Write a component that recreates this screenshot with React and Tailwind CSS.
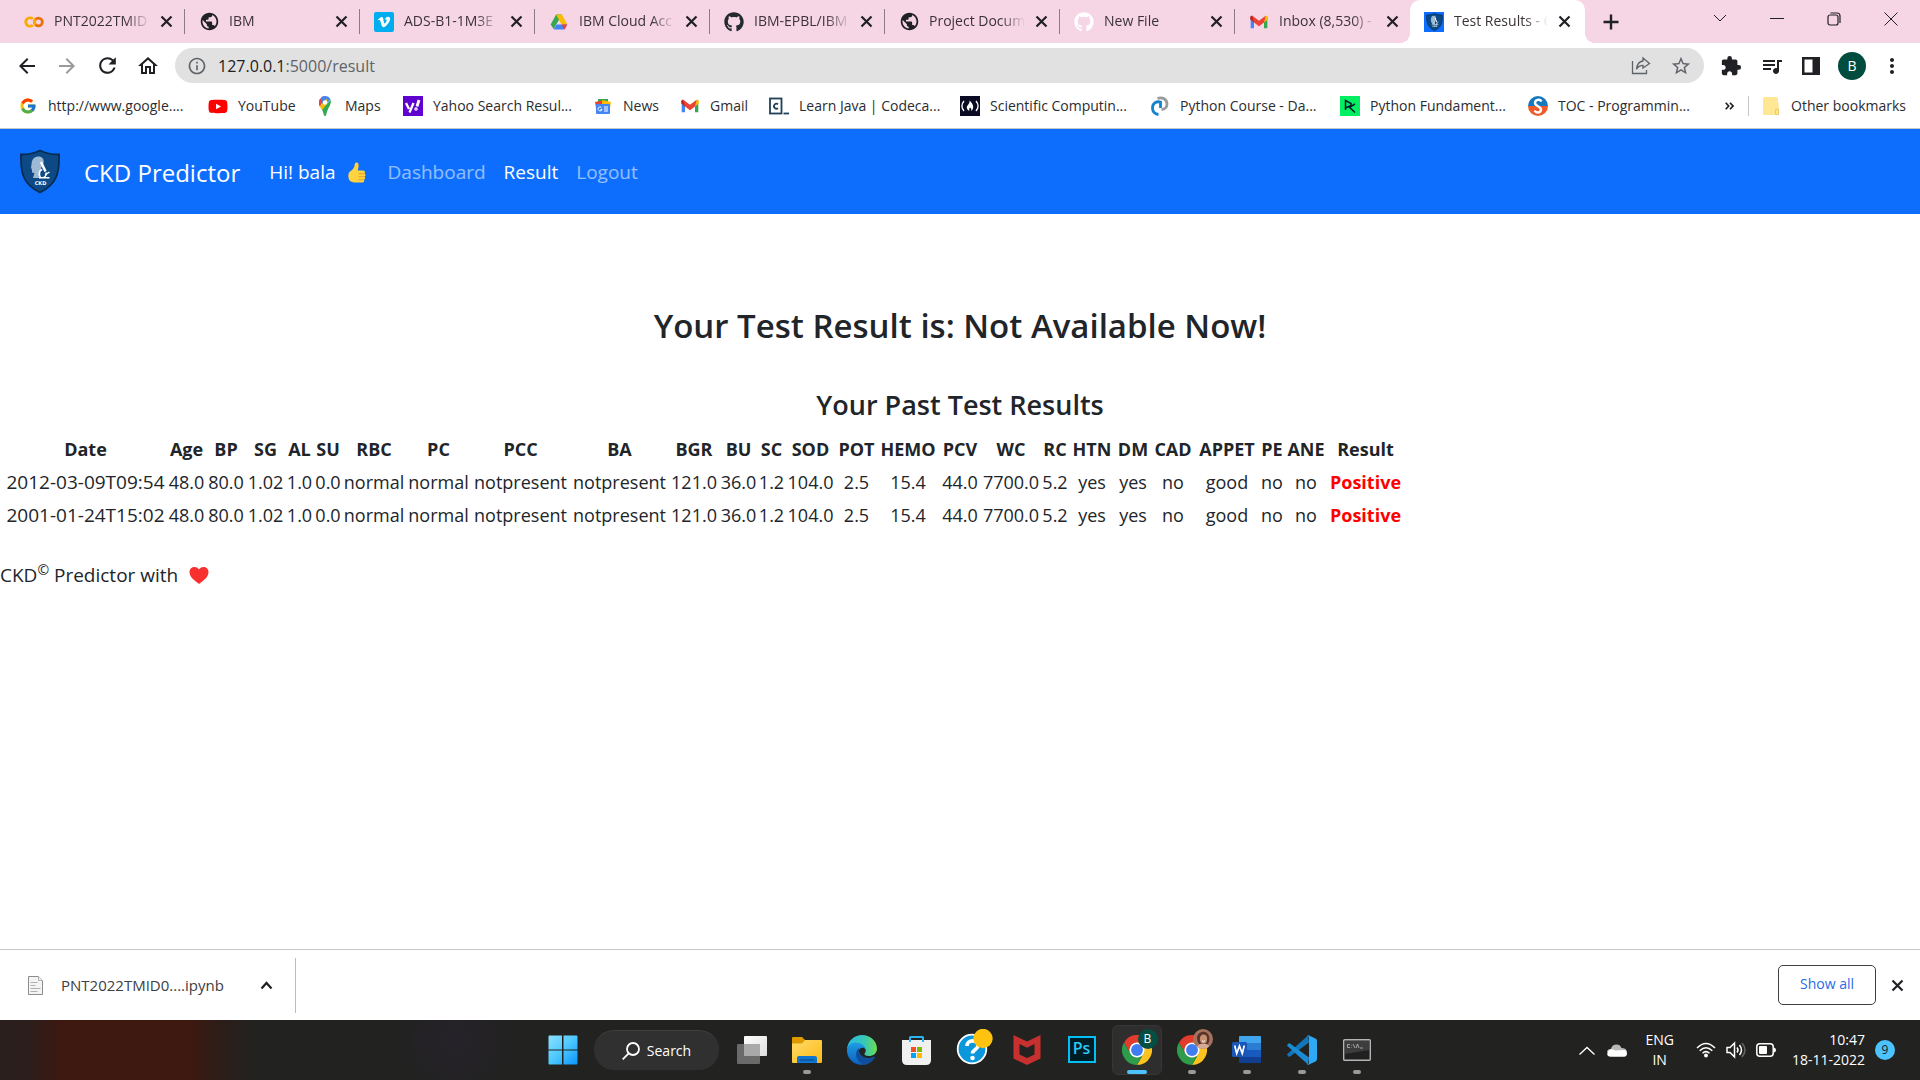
import React from "react";
import {
  MdArrowBack, MdArrowForward, MdRefresh, MdOutlineHome, MdInfoOutline, MdStarBorder,
  MdExtension, MdQueueMusic, MdMoreVert, MdPublic,
} from "react-icons/md";
import { FaGithub, FaYoutube, FaVimeoV } from "react-icons/fa";
import { FcGoogle } from "react-icons/fc";

const Cross = () => (
  <svg width="13" height="13" viewBox="0 0 13 13" fill="none" stroke="currentColor" strokeWidth="2.200"><path d="m1.500 1.500 10 10m0-10-10 10" /></svg>
);

const Gmail = () => (
  <svg viewBox="0 0 24 24" className="size-5">
    <path d="M2 6v13.5h4V11z" fill="#4285f4" />
    <path d="M22 6v13.5h-4V11z" fill="#34a853" />
    <path d="M18 7.5 20 4.6c1.300-.6 2.500.3 2.500 1.600V9L18 12.500z" fill="#fbbc04" />
    <path d="M6 7.500 4 4.600C2.700 4 1.500 4.900 1.500 6.200V9L6 12.500z" fill="#c5221f" />
    <path d="M4 4.500 12 10.500l8-6 -2 8-6 4.500-6-4.500z" fill="#ea4335" />
  </svg>
);

const Colab = () => (
  <svg viewBox="0 0 24 24" className="size-5" fill="none" strokeWidth="3.400">
    <path d="M10.500 8.300a5 5 0 1 0 0 7.400" stroke="#f9ab00" />
    <circle cx="17.300" cy="12" r="4.700" stroke="#e8710a" />
    <path d="M13.800 15.400a5 5 0 0 1 0-6.800" stroke="#f9ab00" />
  </svg>
);

const Vimeo = () => (
  <span className="flex size-5 items-center justify-center rounded-xs bg-[#00adef] text-white"><FaVimeoV size={14} /></span>
);

const Drive = () => (
  <svg viewBox="0 0 24 24" className="size-5">
    <path d="M8.500 3h7L12 9.200 5.500 20.500 2 15z" fill="#34a853" />
    <path d="M8.500 3h7L22 15h-7z" fill="#fbbc04" />
    <path d="M9 15h13l-3.500 6h-13z" fill="#4285f4" />
    <path d="M18.500 21 15 15h7z" fill="#ea4335" />
  </svg>
);

const Shield = ({ className }) => (
  <svg viewBox="0 0 40 44" className={className} role="img" aria-label="CKD logo">
    <path d="M20 1C14 4 8 5 1 5c-.500 18 2 30 19 38C37 35 39.500 23 39 5 32 5 26 4 20 1z" fill="#0d4a85" stroke="#082b50" strokeWidth="1.800" />
    <path d="M17.500 7c4-.500 7 2 6 6.500-.500 2-2.500 4-2.500 6l-1 9h-7l1.500-5c-3 .3-2.500-1-2.500-3l-1-2.500c1-3-.5-10 6.500-11z" fill="#9db9d3" />
    <path d="m21 12.500 4.500 9.500" fill="none" stroke="#fff" strokeWidth="2.600" />
    <path d="M19 28.200h10.500M20.500 27.500c-2.500-2.500-1.500-6.500 1.700-7.500M23.500 28c2.500-1 3-3 2.500-5M25 25.500l4.500-3" fill="none" stroke="#fff" strokeWidth="1.400" />
    <text x="20.500" y="35" textAnchor="middle" fontSize="5" fontWeight="900" fill="#fff" fontFamily="DejaVu Sans">CKD</text>
  </svg>
);

const MapsPin = () => (
  <svg viewBox="0 0 20 20" className="size-5">
    <path d="M4 7.500C4 3.500 6.500 0 10 0l-5 10.500C4.300 9.500 4 8.500 4 7.500z" fill="#ea4335" />
    <path d="M10 0c2.500 0 4.500 1 5.500 3.500L8 11 5.500 3C6.500 1 8 0 10 0z" fill="#4285f4" />
    <path d="M4.800 3 7.500 6 4.800 10.500C3.700 8 3.700 5 4.800 3z" fill="#ea4335" />
    <path d="M4.800 10.500 12 2.500 12.800 8 7 14z" fill="#fbbc04" />
    <path d="M15.500 3.500C17 9 12.500 11 11.200 19c-.300 1.300-2 1.300-2.400 0C8.300 16.500 8 15.500 7 14z" fill="#34a853" />
    <circle cx="10" cy="6.500" r="2.300" fill="#fff" />
  </svg>
);

const Yahoo = () => (
  <span className="flex size-5 bg-[#5f01d1]">
    <svg viewBox="0 0 20 20" className="size-5" fill="none" stroke="#fff" strokeWidth="2.300">
      <path d="m3 7 3 6M10.500 7l-4 9.500" /><path d="m16 4-2 6.500" strokeWidth="2.800" /><circle cx="13" cy="13" r=".600" />
    </svg>
  </span>
);

const News = () => (
  <svg viewBox="0 0 20 20" className="size-5">
    <path d="M5 3h10v5H5z" fill="#34a853" />
    <path d="m2 6 9-2 1 5-9 3z" fill="#ea4335" /><path d="m9 4 9 2-1 6H9z" fill="#fbbc04" />
    <rect x="3" y="8" width="14" height="10" rx="1" fill="#4285f4" />
    <path d="M8.500 11.500A2 2 0 1 0 9 13.500H7.500M11 11h4M11 13h4M11 15h4" stroke="#fff" fill="none" />
  </svg>
);

const Codecademy = () => (
  <svg viewBox="0 0 20 20" className="size-5" fill="none" stroke="#204056">
    <rect x="1" y="2.500" width="11.500" height="15" strokeWidth="1.800" />
    <path d="M9 8.200a2.500 2.500 0 1 0 0 4" strokeWidth="1.800" /><path d="M14.500 17.500H20" strokeWidth="1.800" />
  </svg>
);

const FreeCode = () => (
  <svg viewBox="0 0 20 20" className="size-5">
    <rect width="20" height="20" fill="#0a0a23" />
    <path d="M4 5c-2.500 3-2.500 7 0 10M16 5c2.500 3 2.500 7 0 10" stroke="#fff" strokeWidth="1.300" fill="none" />
    <path d="M9.500 4.500c2 2 3.700 4 3.700 6.500 0 2-1 3.200-2 4 .5-2-.2-3-1.200-3.500-.7 1-1 2-.7 3.500-1.500-.7-2.500-2-2.500-3.700 0-2 3.200-3.300 2.700-6.800z" fill="#fff" />
  </svg>
);

const PyCourse = () => (
  <svg viewBox="0 0 20 20" className="size-5" fill="none" strokeWidth="2.800">
    <path d="M7.500 2.500c5-2 9.500 1 9.500 5.500 0 3-2 5.500-5.500 5.500" stroke="#9a9a9a" />
    <path d="M10.500 12V6C6 5 2.500 7.500 2.500 12c0 4 2.500 6 6 6.500" stroke="#1583cc" />
  </svg>
);

const DataCamp = () => (
  <svg viewBox="0 0 20 20" className="size-5">
    <rect width="20" height="20" fill="#03ef62" />
    <path d="M5.500 14V4.500L11 7.500v2L5.500 12M15 8l-5.500 3.300L15 16.500" stroke="#05192d" strokeWidth="1.500" fill="none" />
  </svg>
);

const Toc = () => (
  <svg viewBox="0 0 20 20" className="size-5">
    <path d="M0 10a10 10 0 0 1 20 0z" fill="#1679bd" /><path d="M0 10a10 10 0 0 0 20 0z" fill="#f0592a" />
    <path d="M13.500 5.500C12 2.500 7 3.500 7 7c0 3.500 6 3 6 6.500 0 3.500-5 4-6.500 1" stroke="#fff" strokeWidth="2.400" fill="none" />
  </svg>
);

const TabShield = () => (
  <span className="flex size-5 items-center justify-center bg-[#0d6efd]"><Shield className="h-[18px] w-[17px]" /></span>
);

const Globe = () => <MdPublic size={21} className="-m-px text-[#202124]" />;

const tabs = [
  { icon: <Colab />, title: "PNT2022TMID" },
  { icon: <Globe />, title: "IBM" },
  { icon: <Vimeo />, title: "ADS-B1-1M3E" },
  { icon: <Drive />, title: "IBM Cloud Acc" },
  { icon: <FaGithub size={20} className="text-[#24292f]" />, title: "IBM-EPBL/IBM" },
  { icon: <Globe />, title: "Project Docum" },
  { icon: <FaGithub size={20} className="text-white" />, title: "New File" },
  { icon: <Gmail />, title: "Inbox (8,530) -" },
  { icon: <TabShield />, title: "Test Results - C", active: true },
];

const bookmarks = [
  { icon: <FcGoogle size={18} />, label: "http://www.google....", w: "w-[190px]" },
  { icon: <FaYoutube size={21} className="text-[#f00]" />, label: "YouTube", w: "w-[107px]" },
  { icon: <MapsPin />, label: "Maps", w: "w-[88px]" },
  { icon: <Yahoo />, label: "Yahoo Search Resul...", w: "w-[190px]" },
  { icon: <News />, label: "News", w: "w-[87px]" },
  { icon: <Gmail />, label: "Gmail", w: "w-[89px]" },
  { icon: <Codecademy />, label: "Learn Java | Codeca...", w: "w-[191px]" },
  { icon: <FreeCode />, label: "Scientific Computin...", w: "w-[190px]" },
  { icon: <PyCourse />, label: "Python Course - Da...", w: "w-[190px]" },
  { icon: <DataCamp />, label: "Python Fundament...", w: "w-[188px]" },
  { icon: <Toc />, label: "TOC - Programmin...", w: "w-[188px]" },
];

function TabStrip() {
  return (
    <div className="flex h-[43px] items-stretch bg-[#f6d5e4] pl-2.5 text-sm">
      {tabs.map((t, i) => (
        <div
          key={i}
          className={
            t.active
              ? "relative flex w-[175px] items-center gap-2.5 rounded-t-[10px] bg-white pl-3.5 pr-3.5 before:absolute before:-left-2.5 before:bottom-0 before:size-2.5 before:bg-[radial-gradient(circle_at_0_0,transparent_10px,#fff_10px)] after:absolute after:-right-2.5 after:bottom-0 after:size-2.5 after:bg-[radial-gradient(circle_at_100%_0,transparent_10px,#fff_10px)]"
              : "flex w-[175px] items-center gap-2.5 pl-3.5"
          }
        >
          <span className="flex w-5 shrink-0 justify-center">{t.icon}</span>
          <span className="min-w-0 flex-1 overflow-hidden whitespace-nowrap pb-0.5 text-[#3b3338] [mask-image:linear-gradient(to_right,#000_75%,transparent)]">{t.title}</span>
          <button aria-label={"Close " + t.title} className="shrink-0 text-[#202124]"><Cross /></button>
          {!t.active && <span className={i === 7 ? "h-6 w-px" : "ml-px h-[25px] w-px bg-[#8d7b84]"} />}
        </div>
      ))}
      <button aria-label="New tab" className="ml-3.5 flex items-center text-[#202124]">
        <svg width="16" height="16" className="mx-1" stroke="currentColor" strokeWidth="2.400"><path d="M8 0.500v15M0.500 8h15" /></svg>
      </button>
      <div className="ml-auto mr-px flex h-[37px] items-center text-[#202124]">
        <button aria-label="Search tabs" className="flex w-[57px] justify-center"><svg width="14" height="9" fill="none" stroke="currentColor"><path d="m1 1 6 6 6-6" /></svg></button>
        <button aria-label="Minimize" className="flex w-[57px] justify-center"><svg width="14" height="9" fill="none" stroke="currentColor"><path d="M0 4.500h14" /></svg></button>
        <button aria-label="Restore" className="flex w-[57px] justify-center"><svg width="14" height="14" fill="none" stroke="currentColor" strokeWidth="1.200"><rect x="1" y="3" width="10" height="10" rx="2" /><path d="M3.500 1H10q3 0 3 3v7" /></svg></button>
        <button aria-label="Close window" className="flex w-[57px] justify-center"><svg width="14" height="14" fill="none" stroke="currentColor"><path d="m.5.5 13 13m0-13-13 13" /></svg></button>
      </div>
    </div>
  );
}

function Toolbar() {
  return (
    <div className="flex h-[45px] items-center bg-white pl-[15px] pr-5 text-[#202124]">
      <div className="flex gap-4">
        <button aria-label="Back"><MdArrowBack size={24} /></button>
        <button aria-label="Forward" className="text-[#9a9a9a]"><MdArrowForward size={24} /></button>
        <button aria-label="Reload"><MdRefresh size={25} /></button>
        <button aria-label="Home"><MdOutlineHome size={24} /></button>
      </div>
      <div className="ml-[15px] flex h-[35px] flex-1 items-center rounded-full bg-[#e1e1e1] pl-3 pr-3 text-[#5f6368]">
        <MdInfoOutline size={20} />
        <div className="ml-[11px] flex-1 text-base">
          <span className="text-[#202124]">127.0.0.1</span>:5000/result
        </div>
        <button aria-label="Share" className="mr-[19px]">
          <svg width="20" height="20" viewBox="0 0 20 20" fill="none" stroke="currentColor" strokeWidth="1.300"><path d="M1.500 5v12.500h14V14M12 2l6.500 5.500L12 12V9.300c-3 0-5 1-6.500 4C6 8.500 8 5.500 12 5z" /></svg>
        </button>
        <button aria-label="Bookmark this page"><MdStarBorder size={22} /></button>
      </div>
      <div className="flex items-center gap-[18px] pl-4">
        <button aria-label="Extensions"><MdExtension size={22} /></button>
        <button aria-label="Media"><MdQueueMusic size={24} /></button>
        <button aria-label="Side panel"><svg width="18" height="18"><path d="M0 0h18v18H0zM2.500 2.500v13h8v-13z" fillRule="evenodd" fill="currentColor" /></svg></button>
        <button aria-label="Profile" className="size-7 rounded-full bg-[#004d40] text-sm text-white">B</button>
        <button aria-label="Menu" className="flex w-4 justify-center"><MdMoreVert size={24} className="shrink-0" /></button>
      </div>
    </div>
  );
}

function Bookmarks() {
  return (
    <nav aria-label="Bookmarks" className="flex h-[41px] items-center border-b border-[#c6c6c6] bg-white pb-1 pl-[18px] pr-3.5 text-sm text-[#2b2c30]">
      {bookmarks.map((b) => (
        <a key={b.label} href="#" className={"flex shrink-0 items-center gap-2.5 whitespace-nowrap " + b.w}>
          <span className="flex w-5 shrink-0 justify-center">{b.icon}</span>
          {b.label}
        </a>
      ))}
      <button aria-label="More bookmarks" className="ml-auto pr-3.5 text-[#202124]"><svg width="9" height="8" fill="none" stroke="currentColor" strokeWidth="1.700"><path d="m.7.7 3 3.300-3 3.300M5 .7 8 4 5 7.300" /></svg></button>
      <a href="#" className="flex h-5 items-center gap-[11px] whitespace-nowrap border-l border-[#c6c6c6] pl-3.5">
        <svg width="17" height="19"><rect width="15" height="18" rx="1.500" fill="#ffe794" /><path d="M12 18v-5q0-1.500 1.500-1.500H15V6h.500v12z" fill="#f8d775" /><path d="M12.500 12.500h3v5h-3z" fill="#ffe794" stroke="#f0cc60" /></svg>
        Other bookmarks
      </a>
    </nav>
  );
}

const ThumbsUp = () => (
  <svg width="18" height="21" viewBox="0 0 18 21" role="img" aria-label="thumbs up">
    <path d="M1.500 10c2-1.500 4.500-3.500 5-6 .2-1.500.2-3.500 2-3.500 2 0 2.500 2 2 4.500l-.8 3.500H15q2 .2 2 1.700c0 .8-.5 1.200-.5 1.200s1 .5 1 1.700-1 1.600-1 1.600.7.600.6 1.600c-.1 1-1.100 1.400-1.100 1.400s.4.500.2 1.300c-.3 1-1.200 1.500-2.400 1.500H7c-3 0-5-1-6-3C0 15 0 11.500 1.500 10z" fill="#ffd23f" />
    <path d="M10.500 11.700h6M10.500 14.700h6M10.500 17.700h5.500" stroke="#e0a01c" strokeWidth=".900" />
  </svg>
);

function SiteNav() {
  return (
    <nav aria-label="Main" className="flex h-[85px] items-center bg-[#0d6efd] px-5">
      <Shield className="h-[45px] w-10" />
      <a href="#" className="ml-6 pt-0.5 text-2xl text-white">CKD Predictor</a>
      <div className="ml-[29px] flex items-center gap-[18px] pt-0.5 text-[19px]">
        <a href="#" className="mr-1 flex items-center gap-3 text-white">Hi! bala <ThumbsUp /></a>
        <a href="#" className="text-white/55">Dashboard</a>
        <a href="#" className="text-white">Result</a>
        <a href="#" className="text-white/55">Logout</a>
      </div>
    </nav>
  );
}

const columns = [
  ["Date", "w-[163px]"], ["Age", "w-[39px]"], ["BP", "w-[40px]"], ["SG", "w-[39px]"], ["AL", "w-[29px]"],
  ["SU", "w-[28px]"], ["RBC", "w-[64px]"], ["PC", "w-[65px]"], ["PCC", "w-[99px]"], ["BA", "w-[99px]"],
  ["BGR", "w-[50px]"], ["BU", "w-[39px]"], ["SC", "w-[27px]"], ["SOD", "w-[51px]"], ["POT", "w-[41px]"],
  ["HEMO", "w-[62px]"], ["PCV", "w-[42px]"], ["WC", "w-[60px]"], ["RC", "w-[28px]"], ["HTN", "w-[46px]"],
  ["DM", "w-[36px]"], ["CAD", "w-[44px]"], ["APPET", "w-[64px]"], ["PE", "w-[26px]"], ["ANE", "w-[42px]"],
  ["Result", "w-[77px]"],
];
const shared = ["48.0", "80.0", "1.02", "1.0", "0.0", "normal", "normal", "notpresent", "notpresent", "121.0", "36.0", "1.2", "104.0", "2.5", "15.4", "44.0", "7700.0", "5.2", "yes", "yes", "no", "good", "no", "no"];
const rows = [["2012-03-09T09:54", ...shared], ["2001-01-24T15:02", ...shared]];

function Results() {
  return (
    <main className="flex-1 bg-white text-[#212529]">
      <h1 className="pt-[88px] text-center text-[33px] font-semibold leading-[48px]">Your Test Result is: Not Available Now!</h1>
      <h2 className="mt-[37px] text-center text-[27px] font-semibold leading-9">Your Past Test Results</h2>
      <table className="ml-1 mt-2.5 table-fixed border-collapse whitespace-nowrap text-center text-lg leading-[33px]">
        <thead>
          <tr>{columns.map(([c, w]) => <th key={c} scope="col" className={"p-0 font-bold " + w}>{c}</th>)}</tr>
        </thead>
        <tbody>
          {rows.map((r) => (
            <tr key={r[0]}>
              {r.map((v, i) => <td key={i} className={i === 0 ? "p-0 text-[19px] leading-[33px]" : "p-0"}>{v}</td>)}
              <td className="p-0 font-bold text-[#f00]">Positive</td>
            </tr>
          ))}
        </tbody>
      </table>
      <footer className="mt-[26px] flex items-center text-[19px] leading-[34px]">
        <span>CKD<sup className="text-sm">©</sup> Predictor with</span>
        <svg width="20" height="19" viewBox="0 0 20 19" className="ml-[11px]" role="img" aria-label="love"><path d="M10 18C5 14 .5 11 .5 6 .5 1 7-1 10 3.500 13-1 19.500 1 19.500 6c0 5-4.500 8-9.500 12z" fill="#f8312f" /></svg>
      </footer>
    </main>
  );
}

function DownloadBar() {
  return (
    <div className="flex h-[71px] items-center border-t border-[#c8c8c8] bg-white pr-4 text-[#202124]">
      <div className="flex h-[55px] w-[296px] items-center border-r border-[#bdbdbd] pl-7">
        <svg width="15" height="19" fill="#f4f4f4" stroke="#8c8c8c"><path d="M.5.5h10l4 4v14H.5z" /><path d="M10.500.5v4h4M2.500 6.500h7M2.500 9.500h5M2.500 12.500h10M2.500 15.500h7" stroke="#b0b0b0" /></svg>
        <span className="ml-[18px] text-[15px] text-[#3c4043]">PNT2022TMID0....ipynb</span>
        <button aria-label="Download options" className="ml-auto mr-[22px]"><svg width="13" height="9" fill="none" stroke="currentColor" strokeWidth="2.200"><path d="m1.500 7.500 5-5.500 5 5.500" /></svg></button>
      </div>
      <button className="ml-auto h-10 w-[98px] rounded-[5px] border border-[#3c4043] pb-0.5 text-sm font-medium text-[#2a6ae8]">Show all</button>
      <button aria-label="Close downloads bar" className="ml-[15px]"><Cross /></button>
    </div>
  );
}

const Start = () => (
  <svg width="30" height="30" viewBox="0 0 30 30">
    <defs><linearGradient id="win" x2="1" y2="1"><stop stopColor="#8fe1ff" /><stop offset=".5" stopColor="#4cc8ff" /><stop offset="1" stopColor="#0a93fb" /></linearGradient></defs>
    <path d="M.5 1.500q0-1 1-1H14v14H.5zM15.500.5h13q1 0 1 1v13h-14zM.5 15.500H14v14H1.500q-1 0-1-1zM15.500 15.500h14v13q0 1-1 1h-13z" fill="url(#win)" />
  </svg>
);
const TaskView = () => (
  <svg width="30" height="28" viewBox="0 0 30 28">
    <defs><linearGradient id="tv" x2="1" y2="1"><stop stopColor="#fff" /><stop offset="1" stopColor="#ddd" /></linearGradient></defs>
    <rect x="7" width="23" height="20" rx="1" fill="url(#tv)" /><rect y="8" width="23" height="20" rx="1" fill="#6a6a6a" /><path d="M7 8h16v12H7z" fill="#a9a9a9" />
  </svg>
);
const Folder = () => (
  <svg width="30" height="27" viewBox="0 0 30 27">
    <defs><linearGradient id="fo" x2="1" y2="1"><stop stopColor="#ffdc6b" /><stop offset="1" stopColor="#fdb813" /></linearGradient></defs>
    <path d="M0 1q0-1 1-1h9l3 3v6H0z" fill="#dd9b00" /><path d="M0 6.500h10L13 3h16q1 0 1 1v21q0 1-1 1H1q-1 0-1-1z" fill="url(#fo)" />
    <path d="M5 26v-5q0-2 2-2h16q2 0 2 2v5z" fill="#0f75cf" /><path d="M8 23h14" stroke="#0a4a8c" strokeWidth="1.200" />
  </svg>
);
const Edge = () => (
  <svg width="30" height="30" viewBox="0 0 30 30">
    <defs>
      <linearGradient id="e1" x2="1"><stop stopColor="#2abbe6" /><stop offset=".600" stopColor="#39c7b5" /><stop offset="1" stopColor="#6cde4c" /></linearGradient>
      <linearGradient id="e2" x2="0" y2="1"><stop stopColor="#1e9de0" /><stop offset="1" stopColor="#0c5fc0" /></linearGradient>
    </defs>
    <path d="M0 14C1 5 8 0 15 0c9 0 15 6.500 15 13.500 0 5-4 7.500-8 7.500-3.500 0-5-1.500-4.500-2.500C20 16 19 10.500 12 10 6 9.500 1 12 0 14z" fill="url(#e1)" />
    <path d="M0 14c2-6 8-7.500 12-6 4 1.300 6.500 4 6.500 6.500-2-3-7-2-7 3C11.500 24 17 28 22 28c-3 2-8 2.500-12 1C3 26.500-.5 20.500 0 14z" fill="url(#e2)" />
    <path d="M12 13c-6 5-2 15 6 16.700C22 29 26 26 28 22.500c.5-1-.5-1-1-.700C20 25 10.500 21 12 13z" fill="#104d9a" />
  </svg>
);
const Store = () => (
  <svg width="29" height="29" viewBox="0 0 29 29">
    <path d="M8 6V1.500Q8 1 8.500 1h12q.5 0 .5.5V6" fill="none" stroke="#2ab4f0" strokeWidth="2" />
    <path d="M0 4h29v20q0 5-5 5H5q-5 0-5-5z" fill="#f0f0f0" /><path d="M8 4v2M21 4v2" stroke="#2ab4f0" strokeWidth="2" />
    <path d="M9 11h5v5H9z" fill="#f25022" /><path d="M15 11h5v5h-5z" fill="#7fba00" /><path d="M9 17h5v5H9z" fill="#00a4ef" /><path d="M15 17h5v5h-5z" fill="#ffb900" />
  </svg>
);
const Help = () => (
  <svg width="38" height="36" viewBox="0 0 38 36" className="-mt-1.5 ml-1.5">
    <circle cx="16" cy="20" r="14.300" fill="#0a97dc" stroke="#fff" strokeWidth="1.800" />
    <path d="M11 17c0-7 11-6.500 11-.5 0 4-5.500 4-5.500 8" fill="none" stroke="#fff" strokeWidth="3.800" /><circle cx="16.500" cy="29" r="2.300" fill="#fff" />
    <circle cx="27" cy="9.500" r="9.700" fill="#ffc20e" />
  </svg>
);
const McAfee = () => (
  <svg width="28" height="30" viewBox="0 0 28 30"><path d="m.5 0 13.500 6.500L27.500 0v23.500L14 30 .5 23.500zM6.500 9v10.500l7.500 3.500 7.500-3.500V9L14 12.800z" fillRule="evenodd" fill="#c6302f" /></svg>
);
const Photoshop = () => (
  <span className="mb-0.5 flex h-[27px] w-7 items-center justify-center border-2 border-[#00c0f5] bg-[#001d26] pb-0.5 text-base font-semibold leading-none text-[#2cc8f5]">Ps</span>
);
const Chrome = () => (
  <svg width="30" height="30" viewBox="0 0 48 48">
    <circle cx="24" cy="24" r="13" fill="#fff" />
    <path d="M24 12h20.800A24 24 0 0 0 3.200 12L13.600 30A12 12 0 0 1 24 12z" fill="#e33b2e" />
    <path d="M34.400 30 24 48A24 24 0 0 0 44.800 12H24A12 12 0 0 1 34.400 30z" fill="#fcc31e" />
    <path d="M13.600 30 3.200 12A24 24 0 0 0 24 48l10.400-18A12 12 0 0 1 13.600 30z" fill="#2d9c4b" />
    <circle cx="24" cy="24" r="9.500" fill="#3f7df0" />
  </svg>
);
const ChromeB = () => (
  <span className="relative"><Chrome /><span className="absolute -right-1.5 -top-1.5 flex size-5 items-center justify-center rounded-full bg-[#064e42] text-xs text-white">B</span></span>
);
const ChromeFace = () => (
  <span className="relative"><Chrome />
    <svg className="absolute -right-1.5 -top-1.5 size-5" viewBox="0 0 20 20">
      <circle cx="10" cy="10" r="10" fill="#a5735d" /><path d="M4 9C4 2 14 0 16 7c1 4 0 7-2 9H7C5 14 4 12 4 9z" fill="#5a342a" />
      <ellipse cx="10.500" cy="10" rx="3.600" ry="4.500" fill="#c98f72" /><path d="M4 17.500c2-4 11-4 12 0-3 3-9 3-12 0z" fill="#d3aa96" /><path d="M9 11.800q1.500 1.200 3 0" stroke="#fff" fill="none" />
    </svg>
  </span>
);
const Word = () => (
  <svg width="30" height="28" viewBox="0 0 30 28">
    <path d="M7 1q0-1 1-1h20q1 0 1 1v6H7z" fill="#41a5ee" /><path d="M7 7h22v7H7z" fill="#2b7cd3" /><path d="M7 14h22v7H7z" fill="#185abd" /><path d="M7 21h22v5q0 1-1 1H8q-1 0-1-1z" fill="#103f91" />
    <rect y="6" width="15" height="15" rx="1.500" fill="#1a56b8" /><path d="m2.700 9.500 2 8 2.800-7.500 2.800 7.500 2-8" fill="none" stroke="#fff" strokeWidth="1.700" />
  </svg>
);
const VSCode = () => (
  <svg width="30" height="30" viewBox="0 0 30 30">
    <path d="m22 7.500-19 14q-.9.500-1.500 0L.4 20.300q-.6-.8 0-1.300L21 .5z" fill="#1177bd" />
    <path d="M22 22.500 3 8.500q-.9-.6-1.500 0L.4 9.700q-.6.800 0 1.300L21 29.500z" fill="#1b8bd6" />
    <path d="M21.500.300 28.500 3.500Q30 4.200 30 6v18q0 1.800-1.500 2.500l-7 3.200q-1 .3-1.800-.6Q22 30 22 27V3q0-2.500-2.300-2.100.8-.9 1.800-.6z" fill="#2fa8f5" />
  </svg>
);
const Terminal = () => (
  <svg width="28" height="22" viewBox="0 0 28 22">
    <rect x=".7" y=".7" width="26.600" height="20.600" rx="1" fill="#202020" stroke="#b5b5b5" strokeWidth="1.400" /><path d="M2 2h24v9L2 15z" fill="#3d3d3d" />
    <path d="M7 5.500H4.500v3H7M8.500 6v.5M8.500 8v.5M10 5l2 4M13 9l1.500-4L16 9M17 9h3" stroke="#bbb" strokeWidth=".8" fill="none" />
  </svg>
);

const apps = [
  ["Task View", <TaskView />, ""], ["File Explorer", <Folder />, "run"], ["Edge", <Edge />, ""], ["Store", <Store />, ""],
  ["Help", <Help />, ""], ["McAfee", <McAfee />, ""], ["Photoshop", <Photoshop />, ""], ["Chrome", <ChromeB />, "active"],
  ["Chrome second profile", <ChromeFace />, "run"], ["Word", <Word />, "run"], ["Visual Studio Code", <VSCode />, "run"], ["Command Prompt", <Terminal />, "run"],
];

function Taskbar() {
  return (
    <div className="grid h-[60px] grid-cols-[1fr_auto_1fr] items-center bg-[#222221] bg-[radial-gradient(ellipse_60px_60px_at_455px_20px,#26222a_0,transparent_100%),linear-gradient(90deg,#2a1f1d_0,#2d1e1b_30px,#3d1911_60px,#3d1911_190px,#2c1d19_222px,#222221_255px)]">
      <span />
      <div className="flex items-center pl-3">
        <button aria-label="Start" className="mr-4"><Start /></button>
        <button className="mr-[5px] flex h-10 w-[125px] items-center justify-center gap-[7px] rounded-full border-t border-[#404040] bg-[#303030] text-sm text-white">
          <svg width="18" height="18" fill="none" stroke="#fff" strokeWidth="1.800"><circle cx="11" cy="7" r="6" /><path d="m6.700 11.300-6 6" /></svg>
          Search
        </button>
        {apps.map(([name, icon, state]) => (
          <button key={name} aria-label={name} className="flex h-[60px] w-[55px] items-center justify-center">
            <span className={state === "active" ? "relative flex size-[50px] items-center justify-center rounded-md border border-[#363636] bg-[#2e2e2e]" : "relative flex size-[50px] items-center justify-center"}>
              {icon}
              {state === "run" && <span className="absolute bottom-px h-1 w-2 rounded-full bg-[#9a9a9a]" />}
              {state === "active" && <span className="absolute bottom-0 h-1 w-5 rounded-full bg-[#4cc2ff]" />}
            </span>
          </button>
        ))}
      </div>
      <div className="flex items-center justify-end pr-[25px] text-sm leading-5 text-white">
        <button aria-label="Hidden icons" className="mr-3"><svg width="16" height="9" fill="none" stroke="#fff" strokeWidth="1.300"><path d="m.5 8.500 7.500-7 7.500 7" /></svg></button>
        <svg width="20" height="14" viewBox="0 0 20 14"><path d="M4 6a5.500 5.500 0 0 1 10.500-1C18 4.500 20 7 20 9l-8 2-12-2c0-2 2-3.500 4-3z" fill="#b8b8b8" /><path d="M1 8.500c2-3 5-2.500 7-1L17 7c2 0 3 2 3 3.500s-1 3.300-3 3.300H4C0 13.800-.5 11 1 8.500z" fill="#fff" /></svg>
        <div className="ml-[18px] mr-[22px] text-center">ENG<br />IN</div>
        <svg width="20" height="16" viewBox="0 0 20 16" fill="none" stroke="#fff" strokeWidth="1.500"><path d="M1 6q9-9 18 0M3.700 8.700q6.300-6 12.600 0M6.500 11.300q3.500-3.300 7 0" /><circle cx="10" cy="13.500" r="1.200" fill="#fff" /></svg>
        <svg width="20" height="18" viewBox="0 0 20 18" fill="none" stroke="#fff" strokeWidth="1.500" className="ml-2.5"><path d="M1 6.500h3L8.500 2v14L4 11.500H1zM11 6.500q2 2.500 0 5M13.500 4q4 5 0 10" /><path d="M16 2q6 7 0 14" stroke="#666" /></svg>
        <svg width="20" height="14" viewBox="0 0 20 14" className="ml-2.5"><rect x=".8" y=".8" width="16.400" height="12.400" rx="3" fill="none" stroke="#fff" strokeWidth="1.500" /><rect x="3" y="3" width="8" height="8" rx="1" fill="#fff" /><path d="M18 4.500q2 .5 2 2.500t-2 2.500z" fill="#fff" /></svg>
        <div className="ml-4 text-right">10:47<br />18-11-2022</div>
        <span className="ml-2.5 flex size-5 items-center justify-center rounded-full bg-[#4cc2ff] text-xs text-[#1a1a1a]">9</span>
      </div>
    </div>
  );
}

export default function App() {
  return (
    <div className="flex min-h-screen flex-col overflow-x-hidden bg-white font-['Segoe_UI','Open_Sans',sans-serif]">
      <header>
        <TabStrip />
        <Toolbar />
        <Bookmarks />
      </header>
      <SiteNav />
      <Results />
      <DownloadBar />
      <Taskbar />
    </div>
  );
}
